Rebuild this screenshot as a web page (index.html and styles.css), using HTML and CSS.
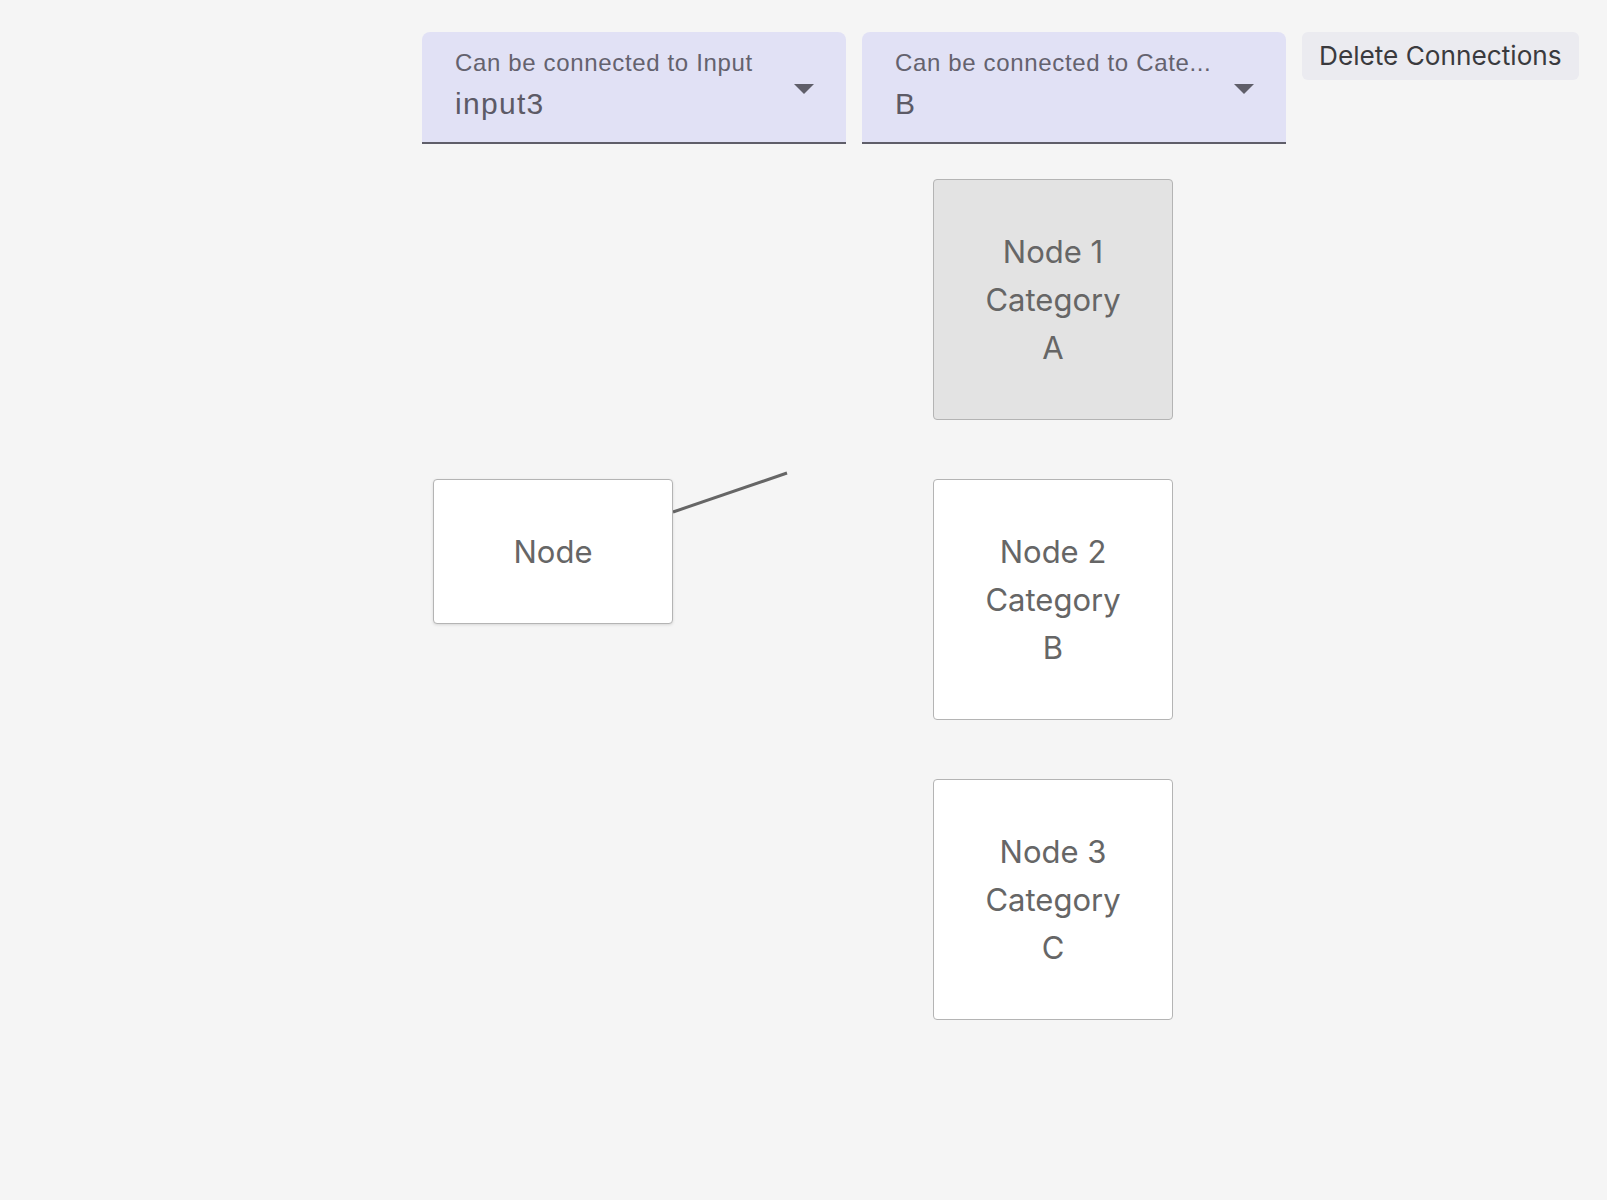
FILE: index.html
```html
<!DOCTYPE html>
<html lang="en">
<head>
<meta charset="utf-8">
<title>Node Connections</title>
<link rel="stylesheet" href="styles.css">
</head>
<body>
<div class="page">
  <header class="toolbar">
    <div class="select">
      <div class="select-text">
        <span class="select-label">Can be connected to Input</span>
        <span class="select-value">input3</span>
      </div>
      <svg class="select-arrow" viewBox="0 0 20 10" width="20" height="10"><path d="M0 0 L10 10 L20 0 Z"/></svg>
    </div>
    <div class="select">
      <div class="select-text">
        <span class="select-label">Can be connected to Cate...</span>
        <span class="select-value">B</span>
      </div>
      <svg class="select-arrow" viewBox="0 0 20 10" width="20" height="10"><path d="M0 0 L10 10 L20 0 Z"/></svg>
    </div>
    <button class="btn">Delete Connections</button>
  </header>
  <main class="canvas">
    <svg class="edges" width="1607" height="1200" viewBox="0 0 1607 1200">
      <line x1="673" y1="512" x2="787" y2="473" stroke="#666666" stroke-width="3"/>
    </svg>
    <div class="node node-input">Node</div>
    <div class="node node-cat node-1 selected"><span>Node 1</span><span>Category</span><span>A</span></div>
    <div class="node node-cat node-2"><span>Node 2</span><span>Category</span><span>B</span></div>
    <div class="node node-cat node-3"><span>Node 3</span><span>Category</span><span>C</span></div>
  </main>
</div>
</body>
</html>
```

FILE: styles.css
```css
html, body {
  margin: 0;
  padding: 0;
  background: #f5f5f5;
  font-family: Inter, "Noto Sans", sans-serif;
}

.page {
  position: relative;
  width: 1607px;
  height: 1200px;
  overflow: hidden;
}

.toolbar {
  position: relative;
  z-index: 1;
  display: flex;
  align-items: flex-start;
  gap: 16px;
  padding: 32px 0 0 422px;
}

.select {
  box-sizing: border-box;
  width: 424px;
  height: 112px;
  background: #e1e1f5;
  border-radius: 8px 8px 0 0;
  border-bottom: 2px solid #5f5e69;
  display: flex;
  justify-content: space-between;
  padding: 17px 32px 0 33px;
}

.select-text {
  display: flex;
  flex-direction: column;
  gap: 8px;
  align-self: flex-start;
}

.select-label {
  font-family: "Liberation Sans", Arial, sans-serif;
  font-size: 24px;
  letter-spacing: 0.65px;
  line-height: 28px;
  color: #64626e;
  white-space: nowrap;
}

.select-value {
  font-family: "Liberation Sans", Arial, sans-serif;
  font-size: 30px;
  letter-spacing: 1.3px;
  line-height: 37px;
  color: #5c5a66;
}

.select-arrow {
  fill: #5f5e69;
  align-self: flex-start;
  margin-top: 35px;
}

.btn {
  box-sizing: border-box;
  height: 48px;
  padding: 0 17px;
  border: none;
  border-radius: 6px;
  background: #ebebf0;
  color: #3a3a3e;
  font-family: Inter, "Noto Sans", sans-serif;
  font-size: 26.2px;
  line-height: 48px;
  cursor: pointer;
}

.canvas {
  position: absolute;
  inset: 0;
}

.edges {
  position: absolute;
  left: 0;
  top: 0;
}

.node {
  position: absolute;
  box-sizing: border-box;
  width: 240px;
  background: #ffffff;
  border: 1px solid #b4b4b4;
  border-radius: 4px;
  color: #666666;
  font-size: 31px;
  line-height: 48px;
  display: flex;
  flex-direction: column;
  align-items: center;
  justify-content: center;
  text-align: center;
}

.node-input {
  left: 433px;
  top: 479px;
  height: 145px;
  box-shadow: 0 1px 3px rgba(0, 0, 0, 0.12);
}

.node-cat {
  left: 933px;
  height: 241px;
}

.node-1 { top: 179px; }
.node-2 { top: 479px; }
.node-3 { top: 779px; }

.node.selected {
  background: #e3e3e3;
}
```
